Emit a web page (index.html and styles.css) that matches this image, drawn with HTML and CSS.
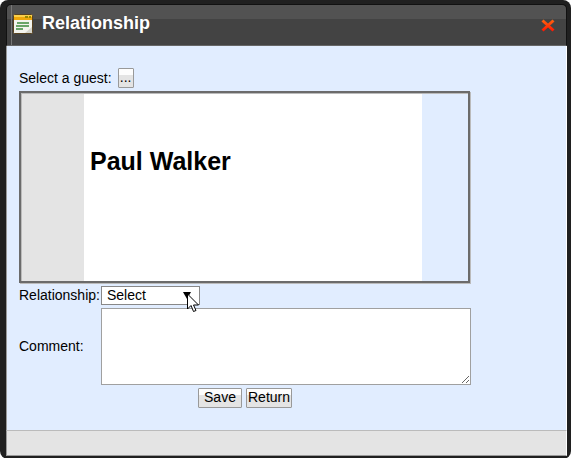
FILE: index.html
```html
<!DOCTYPE html>
<html lang="en">
  <head>
    <meta charset="utf-8">
    <title>Relationship</title>
    <link rel="stylesheet" href="styles.css">
  </head>

  <body>
    <div class="window">
      <header class="titlebar">
        <svg class="title-icon" width="20" height="20" viewBox="0 0 20 20" aria-hidden="true">
          <rect x="0.5" y="0.5" width="19" height="19" rx="1" fill="#f4f4ee" stroke="#5a4420"/>
          <rect x="1" y="1" width="18" height="5" fill="#f0a80c"/>
          <rect x="1" y="1" width="18" height="2" fill="#fbd04a"/>
          <path d="M12 3h3M16 3h2" stroke="#9a8a00" stroke-width="2"/>
          <path d="M4 9h12M3 12h13M3 15h7" stroke="#3d8a3d" stroke-width="1.400"/>
          <path d="M12 19l7-6v6z" fill="#d4d4cc"/>
        </svg>
        <h1 class="title">Relationship</h1>
        <button type="button" class="close" aria-label="Close">
          <svg width="14" height="13" viewBox="0 0 14 13" aria-hidden="true">
            <defs>
              <linearGradient id="red" x1="0" y1="0" x2="0" y2="13" gradientUnits="userSpaceOnUse">
                <stop offset="0" stop-color="#ff6a10"/>
                <stop offset="1" stop-color="#ff1000"/>
              </linearGradient>
            </defs>
            <path d="M1.500 1.500l11 10M12.500 1.500l-11 10" stroke="url(#red)" stroke-width="3"/>
          </svg>
        </button>
      </header>

      <form class="content">
        <div class="guest-row">
          <label for="guest">Select a guest:</label>
          <button type="button" id="guest" class="btn btn-browse">...</button>
        </div>

        <div class="guest-card">
          <h2 class="guest-name">Paul Walker</h2>
        </div>

        <div class="fields">
          <label for="relationship">Relationship:</label>
          <div class="select-wrap">
            <select id="relationship">
              <option>Select</option>
            </select>
            <svg class="arrow" width="8" height="7" viewBox="0 0 8 7" aria-hidden="true">
              <path d="M0 0h8L4 7z"/>
            </svg>
            <svg class="pointer" width="12" height="20" viewBox="0 0 12 20" aria-hidden="true">
              <path d="M.5 1v15l3.500-3.500 2.500 6 2.500-1-2.500-5.500h5z" fill="#fff" stroke="#000"/>
            </svg>
          </div>
          <label for="comment">Comment:</label>
          <textarea id="comment"></textarea>
        </div>

        <div class="actions">
          <button type="button" class="btn btn-save">Save</button>
          <button type="button" class="btn btn-return">Return</button>
        </div>
      </form>

      <footer class="statusbar"></footer>
    </div>
  </body>
</html>
```
FILE: styles.css
```css
* {
  box-sizing: border-box;
}

body {
  margin: 0;
  background: #fff;
  color: #000;
  font: 14px/16px "Liberation Sans", Arial, sans-serif;
}

.window {
  display: flex;
  flex-direction: column;
  min-height: 100vh;
  padding: 4px 4px 3px 6px;
  border-radius: 8px;
  background: #202020;
}

.titlebar {
  display: flex;
  align-items: center;
  height: 42px;
  padding: 0 11px 3px 6px;
  border: 1px solid #111;
  border-bottom-color: #666;
  border-radius: 5px 5px 0 0;
  /* thin light rule left of the icon, over the two-tone bar */
  background:
    linear-gradient(#777, #777) 4px 0 / 1px 100% no-repeat,
    linear-gradient(#525252 14px, #434343 14px);
}

.title {
  flex: 1;
  margin: 0 0 0 9px;
  padding-bottom: 2px;
  color: #fff;
  font-size: 18px;
  line-height: 20px;
}

.close {
  display: flex;
  padding: 0;
  border: 0;
  background: none;
  margin-top: 3px;
}

.content {
  flex: 1;
  padding: 22px 12px;
  border-left: 1px solid #999;
  border-right: 1px solid #fff;
  background: #e1edff;
}

.guest-row {
  display: flex;
  align-items: center;
  gap: 6px;
  height: 23px;
  padding-bottom: 3px;
}

.btn {
  height: 20px;
  padding: 0 2px 2px;
  border: 1px solid #999;
  border-radius: 1px;
  background: linear-gradient(#fdfdfd 6px, #e4e4e4 6px);
  color: #000;
  font: inherit;
}

.btn-browse {
  width: 16px;
  padding: 0 0 2px;
}

.btn-save {
  width: 44px;
}

.btn-return {
  width: 46px;
  padding: 0 0 2px;
}

.guest-card {
  max-width: 451px;
  height: 192px;
  padding: 54px 0 0 69px;
  border: 2px solid #6b6b6b;
  box-shadow: 1px 1px #bbb, inset 1px 1px #bbb;
  background: linear-gradient(90deg, #e4e4e4 63px, #fff 63px, #fff calc(100% - 46px), transparent 0);
}

.guest-name {
  margin: 0;
  font-size: 25px;
  line-height: 28px;
}

.fields {
  display: grid;
  grid-template-columns: 79px 1fr;
  align-items: center;
  gap: 3px;
  max-width: 452px;
  margin-top: 3px;
}

.fields label {
  padding-bottom: 2px;
}

.select-wrap {
  position: relative;
  width: 99px;
}

select {
  display: block;
  width: 100%;
  height: 19px;
  padding: 0 5px 2px;
  border: 1px solid #888;
  border-radius: 0;
  background: #fff;
  color: #000;
  font: inherit;
  appearance: none;
}

.arrow {
  position: absolute;
  top: 6px;
  right: 9px;
}

.pointer {
  position: absolute;
  top: 7px;
  left: 86px;
}

textarea {
  display: block;
  width: 100%;
  height: 77px;
  border: 1px solid #a0a0a0;
  background: #fff;
  font: inherit;
}

.actions {
  display: flex;
  justify-content: center;
  gap: 4px;
  max-width: 452px;
  margin-top: 3px;
}

.statusbar {
  height: 26px;
  border: 1px solid #999;
  border-top-color: #bbb;
  border-right-color: #fff;
  background: #e4e4e4;
}
```
